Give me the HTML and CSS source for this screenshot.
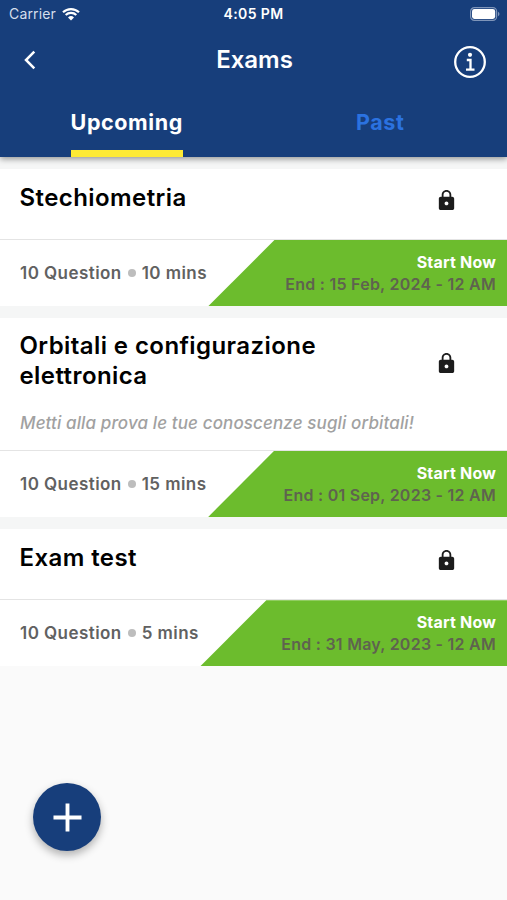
FILE: index.html
```html
<!DOCTYPE html>
<html lang="en">
<head>
    <meta charset="UTF-8">
    <meta name="viewport" content="width=device-width, initial-scale=1.0">
    <title>Exams</title>
    <link rel="stylesheet" href="styles.css">
</head>
<body>
    <svg class="sprite" width="0" height="0">
        <symbol id="lock" viewBox="0 0 24 24">
            <path d="M18 8h-1V6c0-2.76-2.24-5-5-5S7 3.240 7 6v2H6c-1.100 0-2 .9-2 2v10c0 1.100.9 2 2 2h12c1.100 0 2-.9 2-2V10c0-1.100-.9-2-2-2zm-6 9c-1.100 0-2-.9-2-2s.9-2 2-2 2 .9 2 2-.9 2-2 2zm3.100-9H8.900V6c0-1.710 1.390-3.100 3.100-3.100s3.100 1.390 3.100 3.100v2z"/>
        </symbol>
    </svg>

    <header class="header">
        <div class="status">
            <div class="carrier">
                <span>Carrier</span>
                <svg class="wifi" viewBox="0 0 18 14">
                    <path d="M1 5.300a11.500 11.500 0 0 1 16 0M3.700 8a7.600 7.600 0 0 1 10.600 0" fill="none" stroke="#fff" stroke-width="2.200"/>
                    <path d="M9 13.400l-3-3a4.300 4.300 0 0 1 6 0z" fill="#fff"/>
                </svg>
            </div>
            <div class="time">4:05 PM</div>
            <svg class="battery" viewBox="0 0 30 14">
                <rect x=".6" y=".6" width="26" height="12.800" rx="3.800" fill="none" stroke="#7f95b9" stroke-width="1.200"/>
                <rect x="2" y="2" width="23.200" height="10" rx="2.400" fill="#fff"/>
                <path d="M28 4.800c2 .8 2 3.600 0 4.400z" fill="#7f95b9"/>
            </svg>
        </div>
        <div class="bar">
            <svg class="back" viewBox="0 0 12 20"><path d="M10.300 1.600L2 10l8.300 8.400" fill="none" stroke="#fff" stroke-width="2.500"/></svg>
            <h1>Exams</h1>
            <svg class="info" viewBox="0 0 32 32" fill="none" stroke="#fff">
                <circle cx="16" cy="16" r="14.800" stroke-width="2.300"/>
                <circle cx="16" cy="8.800" r="2.100" fill="#fff" stroke="none"/>
                <path d="M12.800 14h3.700v9.500M12 23.700h8.500" stroke-width="2.300"/>
            </svg>
        </div>
        <nav class="tabs">
            <div class="tab"><span class="active">Upcoming</span></div>
            <div class="tab"><span>Past</span></div>
        </nav>
    </header>

    <main class="exams">
        <article class="exam short">
            <div class="top">
                <h2>Stechiometria</h2>
                <svg class="lock"><use href="#lock"/></svg>
            </div>
            <div class="bottom">
                <div class="meta"><span>10 Question</span><i class="dot"></i><span>10 mins</span></div>
                <div class="start"><b>Start Now</b><span>End : 15 Feb, 2024 - 12 AM</span></div>
            </div>
        </article>
        <article class="exam">
            <div class="top">
                <h2>Orbitali e configurazione elettronica</h2>
                <svg class="lock"><use href="#lock"/></svg>
            </div>
            <p class="desc">Metti alla prova le tue conoscenze sugli orbitali!</p>
            <div class="bottom">
                <div class="meta"><span>10 Question</span><i class="dot"></i><span>15 mins</span></div>
                <div class="start"><b>Start Now</b><span>End : 01 Sep, 2023 - 12 AM</span></div>
            </div>
        </article>
        <article class="exam short">
            <div class="top">
                <h2>Exam test</h2>
                <svg class="lock"><use href="#lock"/></svg>
            </div>
            <div class="bottom">
                <div class="meta"><span>10 Question</span><i class="dot"></i><span>5 mins</span></div>
                <div class="start"><b>Start Now</b><span>End : 31 May, 2023 - 12 AM</span></div>
            </div>
        </article>
    </main>

    <button class="add" aria-label="Add exam">
        <svg viewBox="0 0 30 30"><path d="M15 .5v29M.5 15h29" stroke="#fff" stroke-width="4"/></svg>
    </button>
</body>
</html>
```

FILE: styles.css
```css
* { box-sizing: border-box; }
body { margin: 0; height: 900px; background: #fafafa; font-family: Inter, "Liberation Sans", sans-serif; overflow: hidden; }
h1, h2, p { margin: 0; }
svg { display: block; flex: none; }
.sprite { position: absolute; }

.header { position: relative; height: 157px; background: #173e7b; color: #fff; box-shadow: 0 2px 6px rgba(0, 0, 0, 0.4); }
.status { display: grid; grid-template-columns: 1fr auto 1fr; align-items: center; height: 27px; padding: 0 7px 0 9px; }
.carrier { display: flex; align-items: center; gap: 6px; font-size: 14px; letter-spacing: 0.15px; color: #d5deec; }
.wifi { width: 18px; height: 14px; }
.time { margin-left: -2px; font-size: 14px; font-weight: 600; letter-spacing: 0.4px; }
.battery { width: 30px; height: 14px; justify-self: end; }

.bar { display: grid; grid-template-columns: 1fr auto 1fr; align-items: center; height: 66px; padding: 0 21px 0 24px; }
.back { width: 12px; height: 20px; }
h1 { font-size: 24px; font-weight: 600; letter-spacing: 0; margin-top: -1px; margin-left: -1px; }
.info { width: 32px; height: 32px; margin-top: 4px; justify-self: end; }

.tabs { display: grid; grid-template-columns: 1fr 1fr; height: 64px; }
.tab { display: flex; justify-content: center; color: #2b72e0; }
.tab span { padding: 15px 0 1px; font-size: 21.5px; line-height: 28px; font-weight: 700; letter-spacing: 0.6px; }
.tab .active { color: #fff; border-bottom: 7px solid #fdea35; }

.exams { padding-top: 12px; background: #f5f6f6; }
.exam { background: #fff; margin-bottom: 12px; }
.exam:last-child { margin-bottom: 0; }
.top { display: flex; align-items: center; justify-content: space-between; padding: 13px 49.5px 11px 19.5px; }
h2 { max-width: 340px; font-size: 24px; line-height: 29.5px; font-weight: 600; letter-spacing: 0.42px; color: #000; }
.short .top { height: 70px; padding-top: 13.5px; align-items: flex-start; }
.lock { width: 23px; height: 23px; margin-top: 6px; fill: #1c1c1c; }
.desc { height: 49px; padding: 10px 20px 0 20px; font-size: 17px; line-height: 24px; font-style: italic; font-weight: 500; letter-spacing: 0.12px; color: #a1a1a1; }
.bottom { display: flex; height: 67.100px; border-top: 1px solid #e4e4e4; }
.meta { display: flex; align-items: center; padding: 0 1.5px 0 20px; font-size: 17px; font-weight: 600; letter-spacing: 0.44px; color: #616161; }
.dot { width: 8px; height: 8px; margin: 0 6px; border-radius: 50%; background: #bdbdbd; }
.start { display: flex; flex: 1; flex-direction: column; align-items: flex-end; padding: 10.500px 11px 0 0; background: #6cbc2d; clip-path: polygon(66px 0, 100% 0, 100% 100%, 0 100%); font-size: 16px; line-height: 22px; font-weight: 600; letter-spacing: 0.25px; color: #5f634f; white-space: nowrap; }
.start b { font-weight: 700; letter-spacing: 0.2px; color: #fff; }

.add { position: absolute; left: 33px; top: 783px; display: flex; align-items: center; justify-content: center; width: 68px; height: 68px; padding: 0; border: 0; border-radius: 50%; background: #173e7b; box-shadow: 0 4px 8px rgba(0, 0, 0, 0.3); }
.add svg { width: 29px; height: 29px; }
```
